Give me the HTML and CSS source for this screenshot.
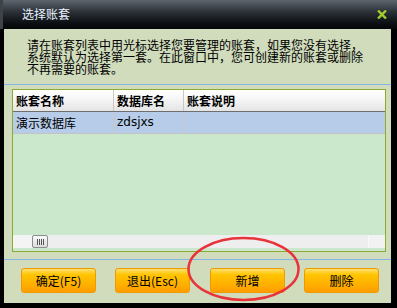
FILE: index.html
```html
<!doctype html>
<html>
<head>
<meta charset="utf-8">
<title>选择账套</title>
<link rel="stylesheet" href="styles.css">
</head>
<body>
<div class="win">
	<div class="title">
		<span class="title_txt">选择账套</span>
		<span class="close">
			<svg width="10" height="9" viewBox="0 0 10 9"><path d="M1 0.5 L9 8.5 M9 0.5 L1 8.5" stroke="#a2cf2c" stroke-width="2.4"/></svg>
		</span>
	</div>
	<div class="main">
		<div class="intro">请在账套列表中用光标选择您要管理的账套，如果您没有选择，<br>系统默认为选择第一套。在此窗口中，您可创建新的账套或删除<br>不再需要的账套。</div>
		<div class="sep"></div>
		<div class="list_box">
			<div class="list_head">
				<div class="cell">账套名称</div>
				<div class="cell">数据库名</div>
				<div class="cell last">账套说明</div>
			</div>
			<div class="list_row">
				<div class="cell">演示数据库</div>
				<div class="cell latin">zdsjxs</div>
				<div class="cell last"></div>
			</div>
			<div class="filler"></div>
			<div class="hscroll">
				<div class="hs_left"></div>
				<div class="hs_thumb"><i></i><i></i><i></i><i></i></div>
				<div class="hs_track"></div>
				<div class="hs_right"></div>
			</div>
		</div>
		<div class="sep sep2"></div>
		<div class="btns">
			<a href="javascript:;" class="btn">确定(F5)</a>
			<a href="javascript:;" class="btn">退出(Esc)</a>
			<a href="javascript:;" class="btn">新增</a>
			<a href="javascript:;" class="btn">删除</a>
		</div>
	</div>
	<svg class="mark" width="397" height="308" viewBox="0 0 397 308"><ellipse cx="243.5" cy="269" rx="55" ry="31" fill="none" stroke="#e9333b" stroke-width="2.5"/></svg>
</div>
</body>
</html>
```

FILE: styles.css
```css
*{margin:0; padding:0; box-sizing:border-box;}
body{font-family:"Noto Sans CJK SC","Liberation Sans",sans-serif; font-size:12px; color:#000;}
.win{width:397px; height:308px; background:#000; display:flex; flex-direction:column; position:relative; overflow:hidden;}
.title{height:29px; display:flex; align-items:center; justify-content:space-between; padding:0 10px 1px 22px; background:linear-gradient(#5e656d,#2c3238 40%,#0c0f13 80%,#050608); box-shadow:inset 3px 0 0 #3e4348;}
.title_txt{color:#eaf2ff; font-size:12px; line-height:14px;}
.close{display:flex; margin-top:1px;}
.main{flex:1; margin:0 6px 5px 4px; background:#d0dcbc; display:flex; flex-direction:column;}
.intro{height:55px; padding:10px 0 0 23px; line-height:12px; white-space:nowrap;}
.sep{height:1px; background:#86b4e4; margin-bottom:4px;}
.sep2{margin-top:7px; margin-bottom:8px;}
.list_box{height:163px; margin:0 5px 0 8px; border:1px solid #8cab30; background:#cce8cc; display:flex; flex-direction:column;}
.list_head,.list_row{display:grid; grid-template-columns:101px 70px 1fr; height:22px;}
.list_head{background:linear-gradient(#fff,#f4f4f4 50%,#e4e4e4); border-bottom:1px solid #6e6e6e; font-weight:bold;}
.list_row{background:#b6cce9; border-bottom:1px solid #c4c4c4;}
.cell{padding-left:3px; line-height:21px; border-right:1px solid #c8c8c8; white-space:nowrap; overflow:hidden;}
.cell.last{border-right:none;}
.latin{font-family:"DejaVu Sans",sans-serif; font-size:12px;}
.filler{flex:1;}
.hscroll{height:13px; margin-bottom:3px; display:flex; background:#eeeeee;}
.hs_left{width:19px; background:#f4f4f4;}
.hs_thumb{width:16px; height:13px; border:1px solid #8c8c8c; border-radius:2px; background:linear-gradient(#fafafa,#dcdcdc); display:flex; justify-content:center; align-items:center; gap:1px;}
.hs_thumb i{display:block; width:1px; height:6px; background:#555;}
.hs_track{flex:1;}
.hs_right{width:17px; background:#f2f2f2; border-left:1px solid #f8f8f8;}
.btns{display:flex; gap:19px; padding-left:17px;}
.btn{width:75px; height:25px; line-height:23px; text-align:center; text-decoration:none; color:#000; border:1px solid #ee9a00; border-radius:3px; background:linear-gradient(#ffe070,#ffc400 25%,#ffae00 70%,#ff9c00); }
.btns .btn:nth-child(3){margin-left:1px;}
.mark{position:absolute; left:0; top:0; pointer-events:none;}
```
